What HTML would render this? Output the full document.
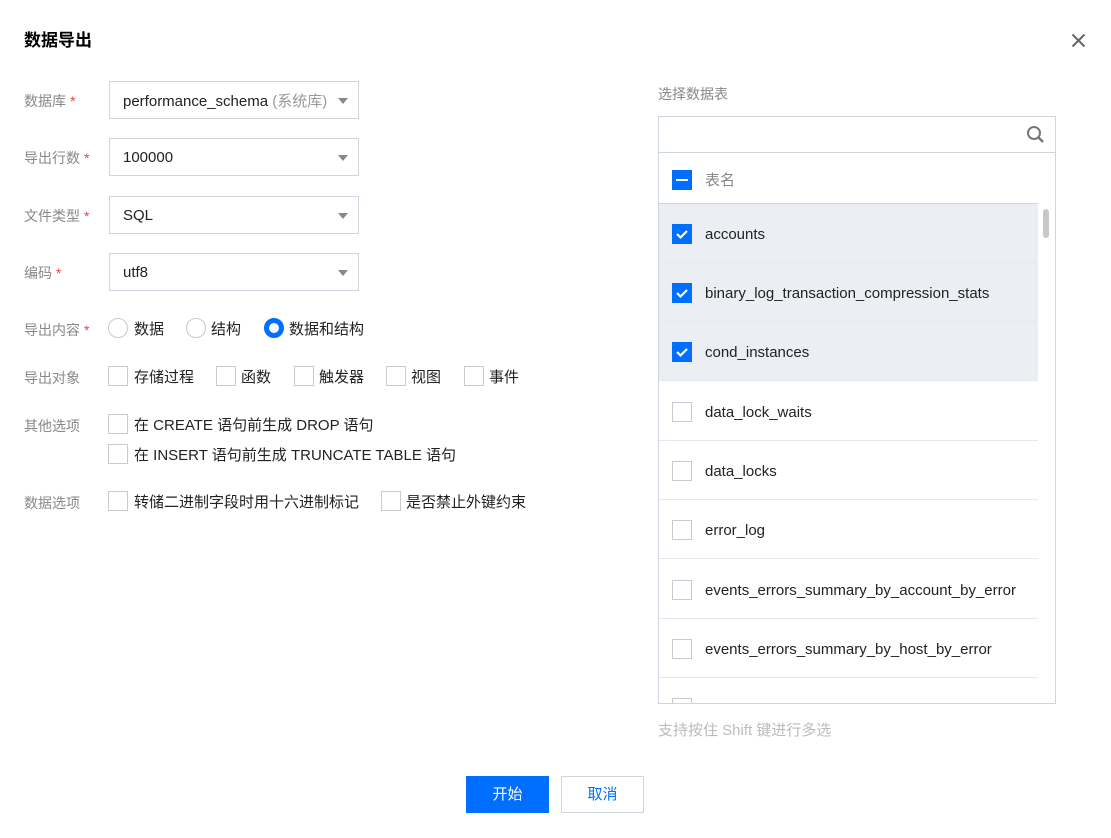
<!DOCTYPE html>
<html><head><meta charset="utf-8"><style>
*{margin:0;padding:0;box-sizing:border-box}
body{width:1111px;height:838px;background:#fff;font-family:"Liberation Sans","Noto Sans CJK SC",sans-serif;font-size:15px;color:#000;position:relative;overflow:hidden}
.a{position:absolute}
.lbl{position:absolute;left:24px;color:#888;font-size:14px}
.req{color:#e54545;margin-left:4px}
.sel{position:absolute;left:109px;width:250px;height:38px;border:1px solid #cfd5de;color:#222;font-size:15px}
.sel span.v{position:absolute;left:13px;top:10px;white-space:nowrap}
.sel:after{content:"";position:absolute;right:10px;top:16px;border-left:5px solid transparent;border-right:5px solid transparent;border-top:6px solid #888}
.cb{position:absolute;width:20px;height:20px;border:1px solid #c6cad1;background:#fff}
.t{position:absolute;color:#222;font-size:15px;white-space:nowrap}
.rad{position:absolute;width:20px;height:20px;border:1px solid #c6cad1;border-radius:50%}
.row{position:absolute;left:659px;width:379px;height:59px;border-bottom:1px solid #e5e8ed}
.row.on{background:#ebeef2}
.row .cb{left:13px;top:20px}
.row .t{left:46px;top:22px}
.chk{background:#006eff;border-color:#006eff}
</style></head><body>
<div class="a" style="left:24px;top:26px;font-size:17px;font-weight:bold;color:#000">数据导出</div>
<svg class="a" style="left:1071px;top:33px" width="15" height="15"><path d="M1.5 1.5L13.5 13.5M13.5 1.5L1.5 13.5" stroke="#666" stroke-width="2"/></svg>

<div class="lbl" style="top:91px">数据库<span class="req">*</span></div>
<div class="sel" style="top:81px"><span class="v" style="top:8px">performance_schema <span style="color:#999">(系统库)</span></span></div>
<div class="lbl" style="top:148px">导出行数<span class="req">*</span></div>
<div class="sel" style="top:138px"><span class="v">100000</span></div>
<div class="lbl" style="top:206px">文件类型<span class="req">*</span></div>
<div class="sel" style="top:196px"><span class="v">SQL</span></div>
<div class="lbl" style="top:263px">编码<span class="req">*</span></div>
<div class="sel" style="top:253px"><span class="v">utf8</span></div>

<div class="lbl" style="top:320px">导出内容<span class="req">*</span></div>
<div class="rad" style="left:108px;top:318px"></div><div class="t" style="left:134px;top:318px">数据</div>
<div class="rad" style="left:186px;top:318px"></div><div class="t" style="left:211px;top:318px">结构</div>
<div class="rad" style="left:264px;top:318px;border:5px solid #006eff"></div><div class="t" style="left:289px;top:318px">数据和结构</div>

<div class="lbl" style="top:368px">导出对象</div>
<div class="cb" style="left:108px;top:366px"></div><div class="t" style="left:134px;top:366px">存储过程</div>
<div class="cb" style="left:216px;top:366px"></div><div class="t" style="left:241px;top:366px">函数</div>
<div class="cb" style="left:294px;top:366px"></div><div class="t" style="left:319px;top:366px">触发器</div>
<div class="cb" style="left:386px;top:366px"></div><div class="t" style="left:411px;top:366px">视图</div>
<div class="cb" style="left:464px;top:366px"></div><div class="t" style="left:489px;top:366px">事件</div>

<div class="lbl" style="top:416px">其他选项</div>
<div class="cb" style="left:108px;top:414px"></div><div class="t" style="left:134px;top:414px">在 CREATE 语句前生成 DROP 语句</div>
<div class="cb" style="left:108px;top:444px"></div><div class="t" style="left:134px;top:444px">在 INSERT 语句前生成 TRUNCATE TABLE 语句</div>

<div class="lbl" style="top:493px">数据选项</div>
<div class="cb" style="left:108px;top:491px"></div><div class="t" style="left:134px;top:491px">转储二进制字段时用十六进制标记</div>
<div class="cb" style="left:381px;top:491px"></div><div class="t" style="left:406px;top:491px">是否禁止外键约束</div>

<div class="a" style="left:658px;top:84px;color:#888;font-size:14px">选择数据表</div>
<div class="a" style="left:658px;top:116px;width:398px;height:588px;border:1px solid #cfd5de;overflow:hidden">
</div>
<div class="a" style="left:659px;top:152px;width:396px;height:1px;background:#cfd5de"></div>
<svg class="a" style="left:1026px;top:125px" width="20" height="20"><circle cx="8" cy="8" r="6" fill="none" stroke="#777" stroke-width="2"/><path d="M12.5 12.5L17 17" stroke="#777" stroke-width="2.5"/></svg>
<div class="a" style="left:659px;top:153px;width:379px;height:51px;border-bottom:1px solid #cfd5de"></div>
<div class="cb chk" style="left:672px;top:170px"><div style="position:absolute;left:3px;top:8px;width:12px;height:2px;background:#fff"></div></div>
<div class="a" style="left:705px;top:169px;color:#888">表名</div>

<div class="row on" style="top:204px"><div class="cb chk"><svg width="18" height="18" style="position:absolute;left:0;top:0"><path d="M4 9l3.5 3.5L14 6" stroke="#fff" stroke-width="2.2" fill="none"/></svg></div><div class="t">accounts</div></div>
<div class="row on" style="top:263px"><div class="cb chk"><svg width="18" height="18" style="position:absolute;left:0;top:0"><path d="M4 9l3.5 3.5L14 6" stroke="#fff" stroke-width="2.2" fill="none"/></svg></div><div class="t">binary_log_transaction_compression_stats</div></div>
<div class="row on" style="top:322px"><div class="cb chk"><svg width="18" height="18" style="position:absolute;left:0;top:0"><path d="M4 9l3.5 3.5L14 6" stroke="#fff" stroke-width="2.2" fill="none"/></svg></div><div class="t">cond_instances</div></div>
<div class="row" style="top:382px"><div class="cb"></div><div class="t">data_lock_waits</div></div>
<div class="row" style="top:441px"><div class="cb"></div><div class="t">data_locks</div></div>
<div class="row" style="top:500px"><div class="cb"></div><div class="t">error_log</div></div>
<div class="row" style="top:560px"><div class="cb"></div><div class="t">events_errors_summary_by_account_by_error</div></div>
<div class="row" style="top:619px"><div class="cb"></div><div class="t">events_errors_summary_by_host_by_error</div></div>
<div class="a" style="left:672px;top:698px;width:20px;height:5px;border:1px solid #c6cad1;border-bottom:none"></div>
<div class="a" style="left:1043px;top:209px;width:6px;height:29px;background:#c8c8c8;border-radius:3px"></div>

<div class="a" style="left:658px;top:719px;color:#bbb">支持按住 Shift 键进行多选</div>

<div class="a" style="left:466px;top:776px;width:83px;height:37px;background:#006eff;color:#fff;text-align:center;line-height:37px">开始</div>
<div class="a" style="left:561px;top:776px;width:83px;height:37px;border:1px solid #cfd5de;color:#006eff;text-align:center;line-height:35px">取消</div>
</body></html>
